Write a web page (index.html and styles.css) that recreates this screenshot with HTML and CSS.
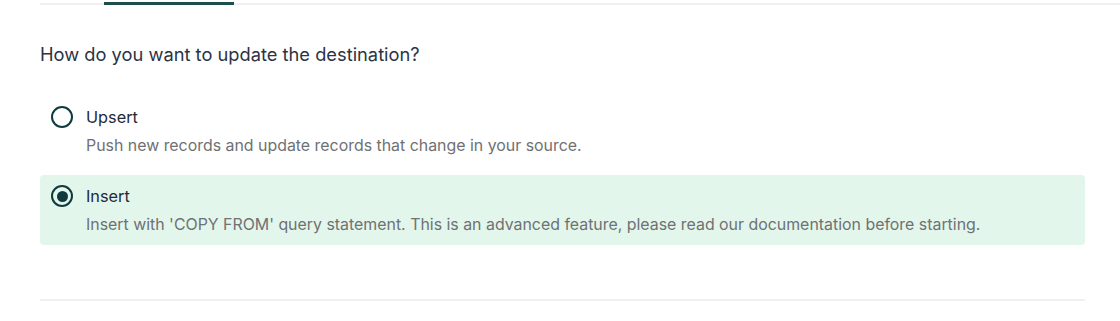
FILE: index.html
```html
<!DOCTYPE html>
<html>
<head>
<meta charset="utf-8">
<link rel="stylesheet" href="styles.css">
</head>
<body>
<div class="tabs"><div class="tab-active"></div></div>
<div class="content">
  <h2 class="question">How do you want to update the destination?</h2>
  <div class="options">
    <div class="option">
      <span class="radio"></span>
      <div class="option-text">
        <div class="label">Upsert</div>
        <div class="desc">Push new records and update records that change in your source.</div>
      </div>
    </div>
    <div class="option selected">
      <span class="radio checked"></span>
      <div class="option-text">
        <div class="label">Insert</div>
        <div class="desc">Insert with 'COPY FROM' query statement. This is an advanced feature, please read our documentation before starting.</div>
      </div>
    </div>
  </div>
  <div class="divider"></div>
</div>
</body>
</html>
```

FILE: styles.css
```css
html, body {
  margin: 0;
  padding: 0;
  background: #ffffff;
  font-family: Inter, "Noto Sans", sans-serif;
}
.tabs {
  display: flex;
  align-items: flex-start;
  margin-left: 40px;
  height: 3px;
  border-bottom: 2px solid #efeff4;
}
.tab-active {
  margin-left: 64px;
  margin-top: 2px;
  width: 130px;
  height: 3px;
  background: #1b4e4d;
}
.content {
  width: 1045px;
  margin-left: 40px;
}
.question {
  margin: 0;
  padding-top: 37px;
  font-size: 18.3px;
  font-weight: 400;
  line-height: 24px;
  color: #2b3344;
}
.options {
  display: flex;
  flex-direction: column;
  gap: 9px;
  margin-top: 30px;
}
.option {
  display: flex;
  align-items: flex-start;
  gap: 13px;
  padding: 10px 12px 10px 11px;
  border-radius: 4px;
}
.option.selected {
  background: #e3f6eb;
}
.radio {
  flex: none;
  box-sizing: border-box;
  width: 22px;
  height: 22px;
  border: 2.5px solid #0f3b3f;
  border-radius: 50%;
  display: flex;
  align-items: center;
  justify-content: center;
}
.radio.checked::after {
  content: "";
  width: 11px;
  height: 11px;
  border-radius: 50%;
  background: #0f3b3f;
}
.option-text {
  display: flex;
  flex-direction: column;
  gap: 8px;
}
.label {
  font-size: 16.3px;
  line-height: 22px;
  color: #1f2a3a;
}
.desc {
  font-size: 15.9px;
  line-height: 20px;
  color: #6f7174;
}
.divider {
  margin-top: 54px;
  height: 2px;
  background: #efeff4;
}
```
